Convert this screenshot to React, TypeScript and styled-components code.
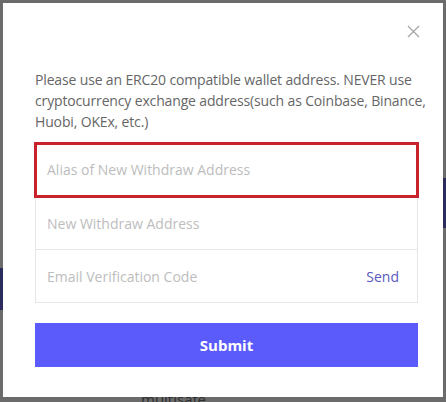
import React from 'react';
import styled, { createGlobalStyle } from 'styled-components';

const GlobalStyle = createGlobalStyle`
  html, body {
    margin: 0;
    padding: 0;
    background: #6b6b6b;
  }
  * {
    box-sizing: border-box;
  }
`;

const Backdrop = styled.div`
  position: relative;
  width: 446px;
  height: 402px;
  padding: 3px 3px 5px;
  background: #6b6b6b;
  overflow: hidden;
  font-family: "Open Sans", "Noto Sans", sans-serif;
`;

// dimmed page content peeking from behind the overlay
const Ghost = styled.div<{ $top: number; $left: number; $w: number; $h: number }>`
  position: absolute;
  top: ${ ({ $top }) => $top }px;
  left: ${ ({ $left }) => $left }px;
  width: ${ ({ $w }) => $w }px;
  height: ${ ({ $h }) => $h }px;
  background: #2b2b5c;
`;

const GhostText = styled.div`
  position: absolute;
  top: 389px;
  left: 141px;
  font-size: 15px;
  line-height: 20px;
  color: #2e2e2e;
`;

const Modal = styled.div`
  position: relative;
  height: 100%;
  background: #ffffff;
  padding: 0 25px 0 32px;
  display: flex;
  flex-direction: column;
`;

const Header = styled.div`
  height: 58px;
  display: flex;
  align-items: center;
  justify-content: flex-end;
`;

const CloseButton = styled.button`
  width: 20px;
  height: 20px;
  margin-right: -5px;
  margin-top: -1px;
  padding: 0;
  border: none;
  background: none;
  cursor: pointer;
  display: flex;
  align-items: center;
  justify-content: center;
`;

const Notice = styled.p`
  margin: 8px -16px 0 0;
  font-size: 14px;
  letter-spacing: -0.15px;
  line-height: 21px;
  color: #666666;
`;

const FieldGroup = styled.div`
  margin-top: 11px;
  border: 1px solid #e6e6e6;
  border-bottom: none;
`;

const FieldRow = styled.div<{ $highlight?: boolean }>`
  height: 53px;
  display: flex;
  align-items: center;
  padding: 0 18px 0 9px;
  border-bottom: 1px solid #e6e6e6;
  ${ ({ $highlight }) => $highlight && `
    outline: 3px solid #c8232c;
    outline-offset: -2px;
    position: relative;
    margin: -1px -1px 0;
    padding: 0 19px 0 10px;
    height: 54px;
  ` }
`;

const Input = styled.input`
  flex: 1;
  min-width: 0;
  border: none;
  outline: none;
  background: transparent;
  font-family: inherit;
  font-size: 14px;
  color: #333333;

  &::placeholder {
    color: #bdbdbd;
  }
`;

const SendLink = styled.span`
  font-size: 14px;
  color: #5a58c0;
  cursor: pointer;
`;

const SubmitButton = styled.button`
  margin-top: 20px;
  height: 44px;
  border: none;
  background: #5b5bfb;
  color: #ffffff;
  font-family: inherit;
  font-size: 15px;
  font-weight: 700;
  cursor: pointer;
`;

const CloseIcon = () => (
  <svg width="13" height="13" viewBox="0 0 13 13">
    <path d="M1 1 L12 12 M12 1 L1 12" stroke="#a6a6a6" strokeWidth="1.3" fill="none"/>
  </svg>
);

export default function App() {
  return (
    <>
      <GlobalStyle/>
      <Backdrop>
        <Ghost $top={ 268 } $left={ 0 } $w={ 4 } $h={ 42 }/>
        <Ghost $top={ 178 } $left={ 442 } $w={ 4 } $h={ 50 }/>
        <GhostText>multisafe</GhostText>
        <Modal>
          <Header>
            <CloseButton aria-label="Close">
              <CloseIcon/>
            </CloseButton>
          </Header>
          <Notice>
            Please use an ERC20 compatible wallet address. NEVER use cryptocurrency exchange
            address(such as Coinbase, Binance, Huobi, OKEx, etc.)
          </Notice>
          <FieldGroup>
            <FieldRow $highlight>
              <Input placeholder="Alias of New Withdraw Address"/>
            </FieldRow>
            <FieldRow>
              <Input placeholder="New Withdraw Address"/>
            </FieldRow>
            <FieldRow>
              <Input placeholder="Email Verification Code"/>
              <SendLink>Send</SendLink>
            </FieldRow>
          </FieldGroup>
          <SubmitButton>Submit</SubmitButton>
        </Modal>
      </Backdrop>
    </>
  );
}
